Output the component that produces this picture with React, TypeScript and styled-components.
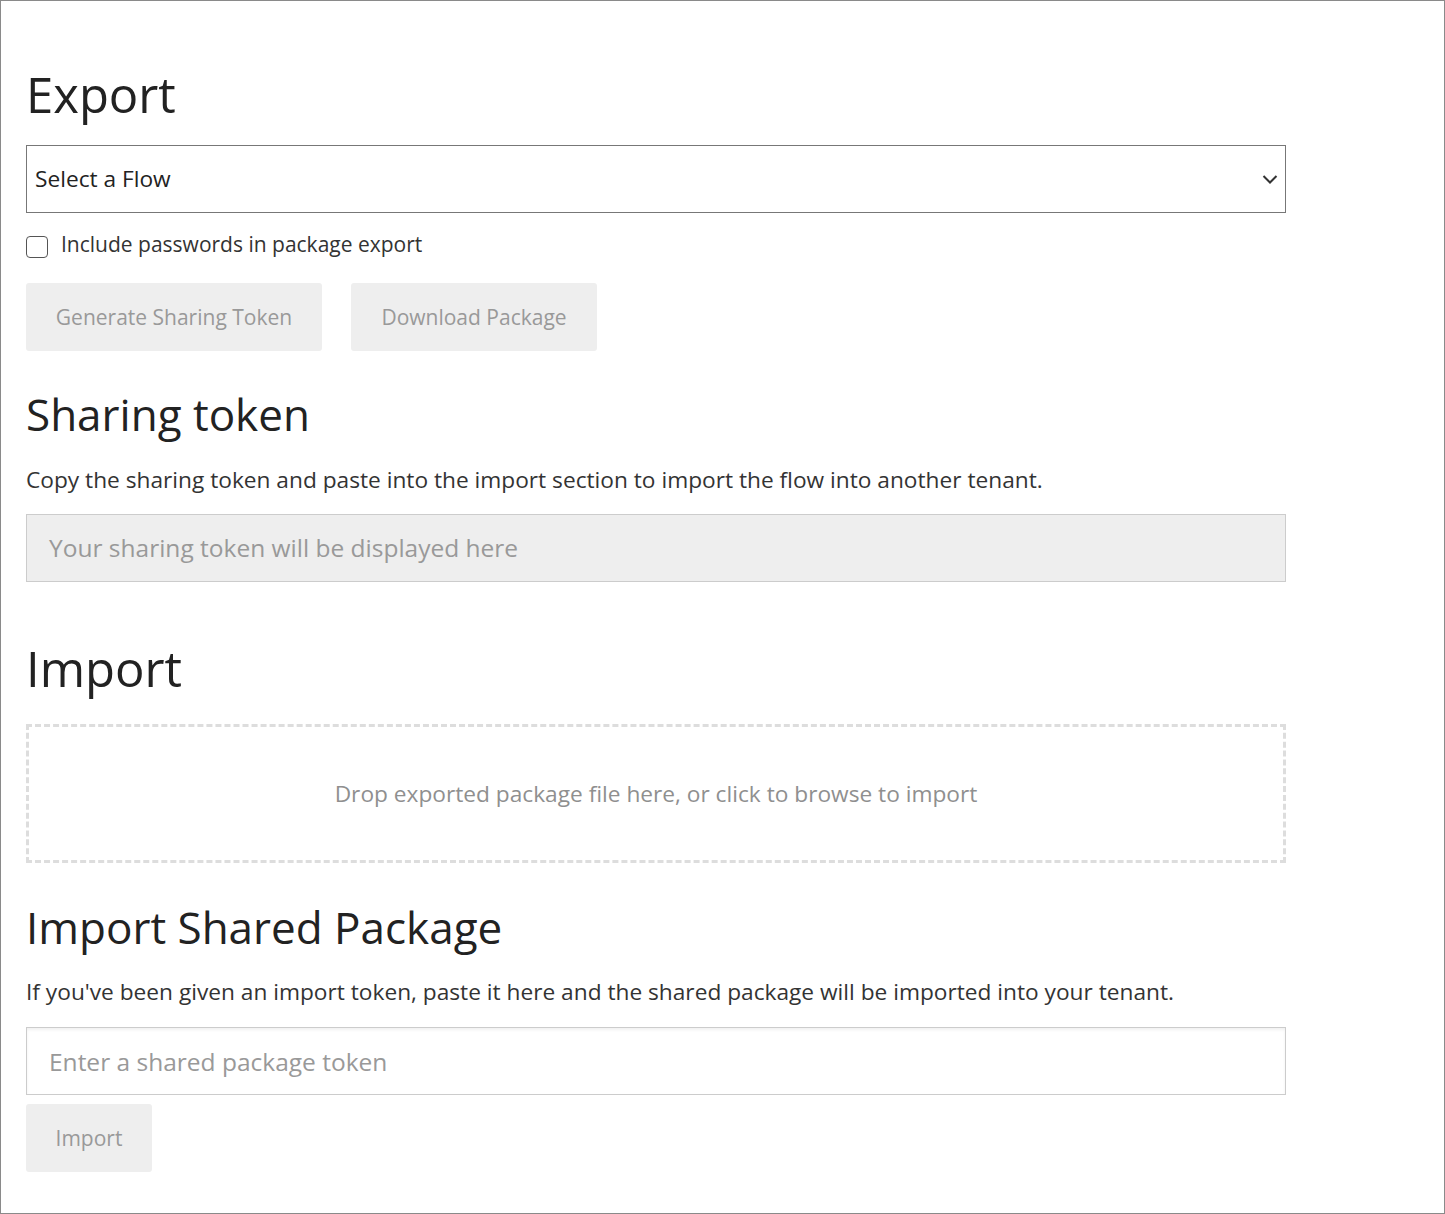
import styled, { createGlobalStyle } from 'styled-components'

const GlobalStyle = createGlobalStyle`
  html, body {
    margin: 0;
    padding: 0;
    background: #fff;
  }
  body {
    font-family: "Open Sans", "Liberation Sans", sans-serif;
    color: #333;
  }
  * {
    box-sizing: border-box;
  }
`

const Frame = styled.div`
  min-height: 100vh;
  border: 1px solid #8a8a8a;
  padding: 0 25px 40px;
`

const Content = styled.div`
  width: 1260px;
  display: flex;
  flex-direction: column;
`

const Heading = styled.h1<{ $size: number; $top: number; $bottom: number }>`
  margin: ${({ $top }) => $top}px 0 ${({ $bottom }) => $bottom}px;
  font-size: ${({ $size }) => $size}px;
  line-height: 1.2;
  font-weight: 400;
  color: #222;
`

const Text = styled.p<{ $bottom: number }>`
  margin: 0 0 ${({ $bottom }) => $bottom}px;
  font-size: 22.7px;
  line-height: 1.5;
  color: #333;
`

const SelectBox = styled.div`
  height: 68px;
  border: 1px solid #777;
  display: flex;
  align-items: center;
  justify-content: space-between;
  padding: 0 6px 0 8px;
  font-size: 22.7px;
  color: #222;
`

const CheckRow = styled.label`
  margin-top: 16px;
  display: flex;
  align-items: center;
  gap: 13px;
  font-size: 21px;
  line-height: 30px;
  color: #333;
`

const CheckBox = styled.span`
  width: 22px;
  height: 22px;
  margin-top: 6px;
  border: 1px solid #555;
  border-radius: 4px;
  background: #fff;
`

const ButtonRow = styled.div`
  margin-top: 24px;
  display: flex;
  gap: 29px;
`

const Button = styled.button<{ $width: number }>`
  width: ${({ $width }) => $width}px;
  height: 68px;
  border: none;
  border-radius: 3px;
  background: #eeeeee;
  color: #999;
  font-family: "Open Sans", "Liberation Sans", sans-serif;
  font-size: 21px;
  padding: 0;
`

const TokenBox = styled.div`
  height: 68px;
  background: #eeeeee;
  border: 1px solid #cccccc;
  display: flex;
  align-items: center;
  padding: 0 22px;
  font-size: 24.5px;
  color: #999;
`

const DropZone = styled.div`
  height: 139px;
  border: 3px dashed #dddddd;
  display: flex;
  align-items: center;
  justify-content: center;
  font-size: 22.7px;
  color: #8f8f8f;
`

const TokenInput = styled.div`
  height: 68px;
  border: 1px solid #cccccc;
  box-shadow: inset 0 2px 3px rgba(0, 0, 0, 0.06);
  display: flex;
  align-items: center;
  padding: 0 22px;
  font-size: 24.5px;
  color: #999;
`

const ImportRow = styled.div`
  margin-top: 9px;
  display: flex;
`

function Chevron() {
  return (
    <svg width="18" height="18" viewBox="0 0 18 18" fill="none">
      <path d="M2.5 6 L9 12.5 L15.5 6" stroke="#333" strokeWidth="2" />
    </svg>
  )
}

export default function App() {
  return (
    <>
      <GlobalStyle />
      <Frame>
        <Content>
          <Heading $size={49} $top={64} $bottom={21}>
            Export
          </Heading>
          <SelectBox>
            <span>Select a Flow</span>
            <Chevron />
          </SelectBox>
          <CheckRow>
            <CheckBox />
            Include passwords in package export
          </CheckRow>
          <ButtonRow>
            <Button $width={296}>Generate Sharing Token</Button>
            <Button $width={246}>Download Package</Button>
          </ButtonRow>

          <Heading as="h2" $size={44} $top={37} $bottom={22}>
            Sharing token
          </Heading>
          <Text $bottom={17}>
            Copy the sharing token and paste into the import section to import
            the flow into another tenant.
          </Text>
          <TokenBox>Your sharing token will be displayed here</TokenBox>

          <Heading $size={49} $top={57} $bottom={27}>
            Import
          </Heading>
          <DropZone>
            Drop exported package file here, or click to browse to import
          </DropZone>

          <Heading as="h2" $size={44} $top={38} $bottom={21}>
            Import Shared Package
          </Heading>
          <Text $bottom={18}>
            If you've been given an import token, paste it here and the shared
            package will be imported into your tenant.
          </Text>
          <TokenInput>Enter a shared package token</TokenInput>
          <ImportRow>
            <Button $width={126}>Import</Button>
          </ImportRow>
        </Content>
      </Frame>
    </>
  )
}
